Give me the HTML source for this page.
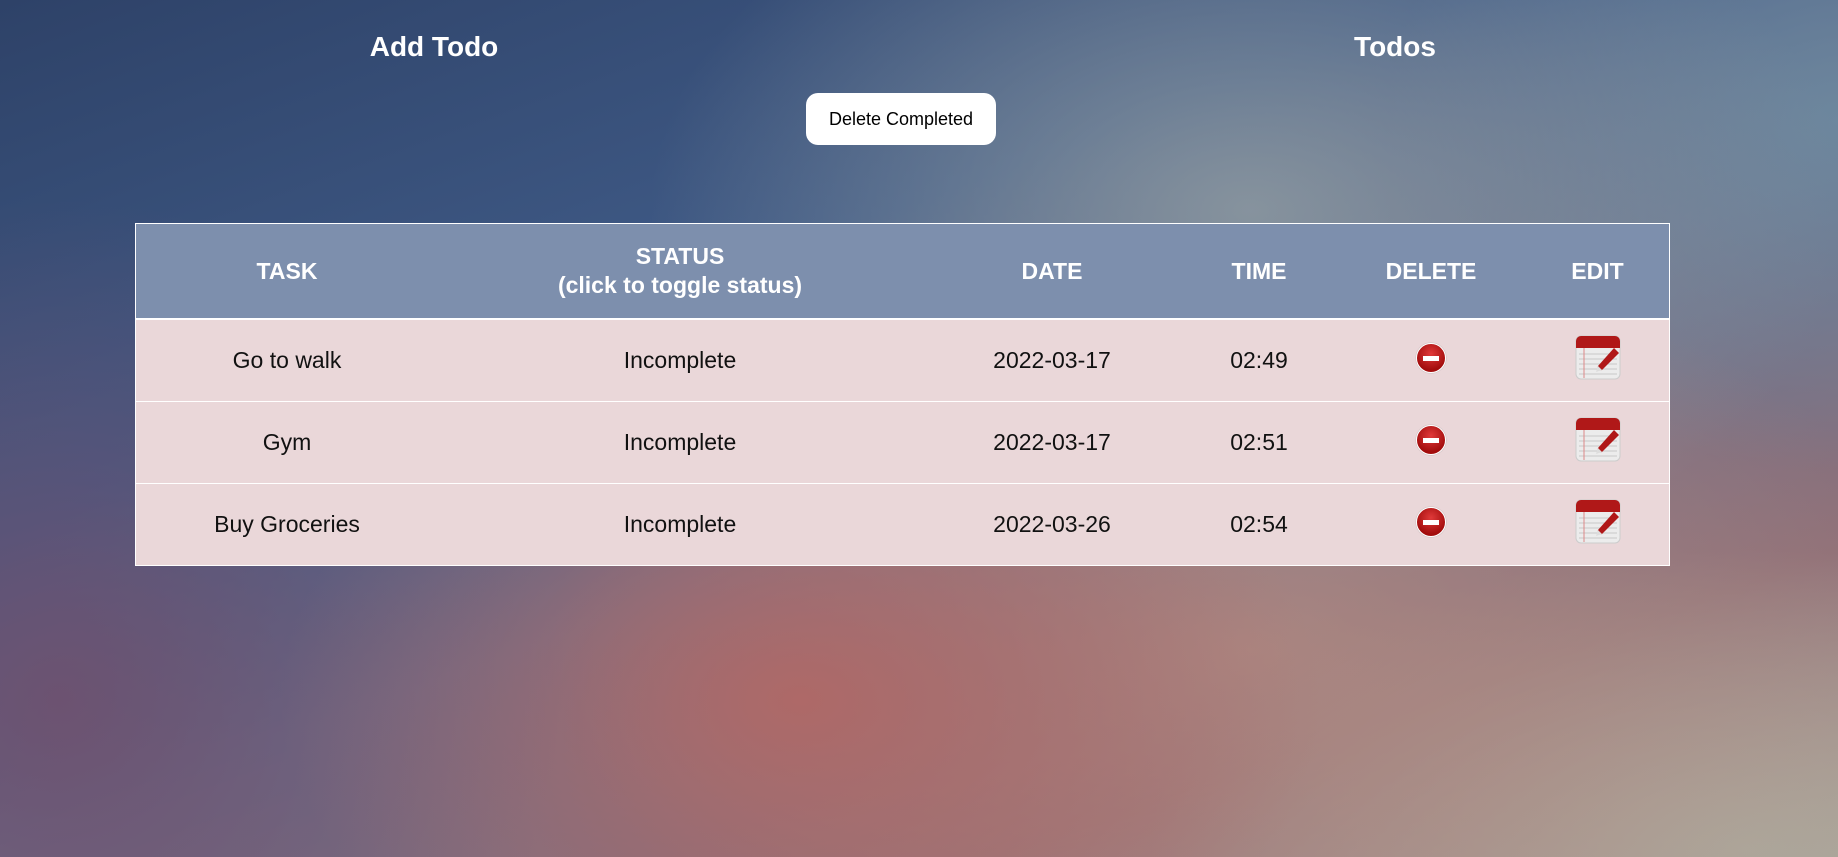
<!DOCTYPE html>
<html><head><meta charset="utf-8"><style>
html,body{margin:0;padding:0;}
body{width:1838px;height:857px;overflow:hidden;position:relative;font-family:"Liberation Sans",sans-serif;
background:
radial-gradient(ellipse 520px 340px at 800px 700px, rgba(176,104,102,0.95), rgba(176,104,102,0) 100%),
radial-gradient(ellipse 700px 400px at 1250px 650px, rgba(180,140,130,0.8), rgba(180,140,130,0) 100%),
radial-gradient(ellipse 600px 300px at 1750px 850px, rgba(172,168,156,1), rgba(172,168,156,0) 100%),
radial-gradient(ellipse 600px 380px at 1250px 210px, rgba(140,152,160,0.9), rgba(140,152,160,0) 100%),
radial-gradient(ellipse 450px 350px at 1838px 120px, rgba(110,138,160,0.9), rgba(110,138,160,0) 100%),
radial-gradient(ellipse 500px 500px at 60px 700px, rgba(110,80,110,0.9), rgba(110,80,110,0) 100%),
linear-gradient(160deg,#2e4268 0%,#3f5a86 35%,#6a6e8a 55%,#8f7078 80%,#a89690 100%);}
h2{position:absolute;margin:0;color:#fff;font-size:28px;font-weight:bold;top:31px;transform:translateX(-50%);}
.btn{position:absolute;left:806px;top:93px;width:190px;height:52px;background:#fff;border-radius:12px;font-size:18px;line-height:52px;text-align:center;color:#000;}
table{position:absolute;left:135px;top:223px;width:1535px;border-collapse:collapse;border:1px solid #fff;}
th{background:#7d8fad;color:#fff;font-size:23px;font-weight:bold;height:94px;text-align:center;line-height:29px;padding:0;border-bottom:2px solid #fff;}
td{background:#ead7d9;height:81px;text-align:center;font-size:23px;color:#111;padding:0;border-bottom:1px solid #fff;}
.del{display:inline-block;width:28px;height:28px;border-radius:50%;background:radial-gradient(circle at 50% 35%,#e03a3a,#a30d0d 70%);border:1px solid #fff;position:relative;vertical-align:middle;margin-top:-8px;box-shadow:0 0 1px #888}
.del:after{content:"";position:absolute;left:6px;top:12px;width:16px;height:5px;background:#fff;}
</style></head><body>
<h2 style="left:434px">Add Todo</h2>
<h2 style="left:1395px">Todos</h2>
<div class="btn">Delete Completed</div>
<table>
<tr><th style="width:302px">TASK</th><th style="width:484px">STATUS<br>(click to toggle status)</th><th style="width:260px">DATE</th><th style="width:154px">TIME</th><th style="width:190px">DELETE</th><th>EDIT</th></tr>
<tr><td>Go to walk</td><td>Incomplete</td><td>2022-03-17</td><td>02:49</td><td><span class="del"></span></td><td>ED</td></tr>
<tr><td>Gym</td><td>Incomplete</td><td>2022-03-17</td><td>02:51</td><td><span class="del"></span></td><td>ED</td></tr>
<tr><td>Buy Groceries</td><td>Incomplete</td><td>2022-03-26</td><td>02:54</td><td><span class="del"></span></td><td>ED</td></tr>
</table>
<script>
document.querySelectorAll('td').forEach(function(td){if(td.textContent==='ED'){td.innerHTML='<svg width="46" height="46" viewBox="0 0 46 46" style="vertical-align:middle;margin-top:-8px"><rect x="1" y="2" width="44" height="43" rx="5" fill="#ececec" stroke="#ccc"/><path d="M1 7a5 5 0 0 1 5-5h34a5 5 0 0 1 5 5v7H1z" fill="#b01818"/><g stroke="#c8c8c8" stroke-width="1"><line x1="4" y1="20" x2="42" y2="20"/><line x1="4" y1="25" x2="42" y2="25"/><line x1="4" y1="30" x2="42" y2="30"/><line x1="4" y1="35" x2="42" y2="35"/><line x1="4" y1="40" x2="42" y2="40"/></g><line x1="9" y1="14" x2="9" y2="44" stroke="#d88" stroke-width="1"/><path d="M39 14l5 5-17 17-5 1 1-5z" fill="#b01818"/><path d="M23 32l4 4-6 2z" fill="#ddd"/></svg>';}});
</script>
</body></html>
